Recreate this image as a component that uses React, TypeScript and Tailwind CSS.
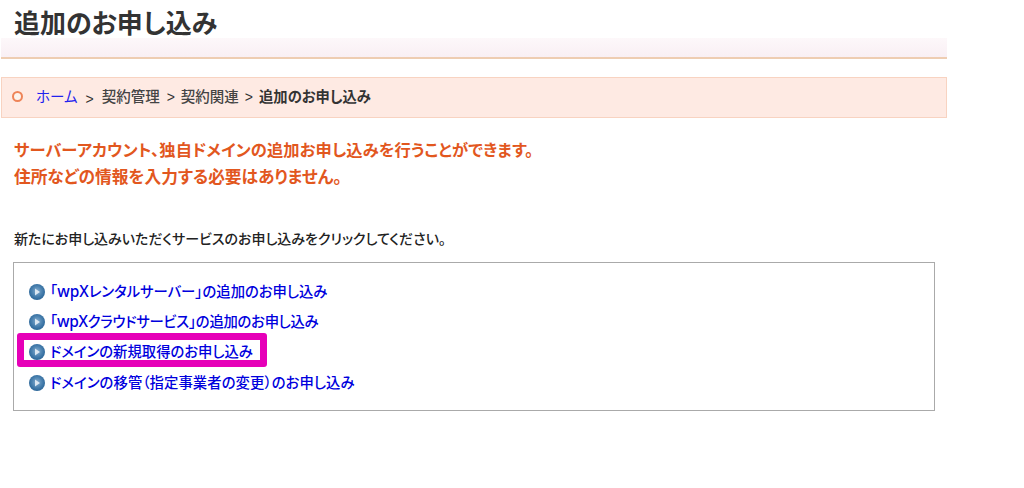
const font = "font-['Liberation_Sans','Noto_Sans_CJK_JP',sans-serif]";

function Bullet() {
  return (
    <svg width="18" height="18" viewBox="0 0 18 18" className="shrink-0 blur-[0.4px]">
      <defs>
        <radialGradient id="bl" cx="50%" cy="45%" r="55%">
          <stop offset="0%" stopColor="#7fa9cc" />
          <stop offset="60%" stopColor="#3f79aa" />
          <stop offset="100%" stopColor="#1f5d92" />
        </radialGradient>
      </defs>
      <circle cx="9" cy="9" r="8" fill="url(#bl)" opacity="0.95" />
      <path d="M7 5.6 L12 9 L7 12.4 Z" fill="#e8f0f7" opacity="0.9" />
    </svg>
  );
}

function LinkRow({ children, spacing = "" }: { children: React.ReactNode; spacing?: string }) {
  return (
    <div className="flex items-center gap-[4px] h-[30.2px] pl-[14px]">
      <Bullet />
      <a className={`text-[14.35px] leading-[20px] font-medium text-[#0000dd] [font-feature-settings:'palt'] whitespace-nowrap ${spacing}`}>{children}</a>
    </div>
  );
}

function Wpx() {
  return <span className="font-['Noto_Sans',sans-serif] text-[15.5px] leading-none font-medium">wpX</span>;
}

export default function App() {
  return (
    <div className={`${font} w-[1024px] h-[488px] bg-white overflow-hidden text-[#333]`}>
      <div className="w-[947px]">
        <h1 className="h-[38px] pl-[14px] pt-[7px] text-[26px] leading-[34px] font-bold text-[#333] [font-feature-settings:'palt'] overflow-visible whitespace-nowrap">追加のお申し込み</h1>
        <div className="h-[21px] ml-[1px] bg-gradient-to-b from-[#fdf8fa] to-[#f9eff4] border-b-2 border-[#eecdb2]"></div>

        <div className="mt-[18px] h-[41px] ml-[1px] bg-[#feeae3] border border-[#f8d3c1] flex items-center pl-[10px] text-[14px] whitespace-nowrap">
          <span className="w-[11px] h-[11px] rounded-full border-2 border-[#ee8458] bg-[#fdf3ec] mb-[3px]"></span>
          <a className="ml-[13px] text-[14.5px] font-normal text-[#2222ee] [font-feature-settings:'palt']">ホーム</a>
          <span className="ml-[8px] mt-[3px] text-[#333] font-normal">&gt;</span>
          <span className="ml-[8px] text-[14.5px] text-[#444] font-medium [font-feature-settings:'palt']">契約管理</span>
          <span className="ml-[7px] font-normal">&gt;</span>
          <span className="ml-[6px] text-[14.5px] text-[#444] font-medium [font-feature-settings:'palt']">契約関連</span>
          <span className="ml-[6px] font-normal">&gt;</span>
          <span className="ml-[6px] text-[14.3px] font-bold text-[#333] [font-feature-settings:'palt']">追加のお申し込み</span>
        </div>

        <div className="mt-[19px] pl-[14px] text-[16.3px] leading-[27px] font-bold text-[#e2571e] [font-feature-settings:'palt'] whitespace-nowrap">
          <p className="tracking-[0.1px]">サーバーアカウント<span className="[font-feature-settings:'normal']">、</span>独自ドメインの追加お申し込みを行うことができます。</p>
          <p className="text-[16.7px]">住所などの情報を入力する必要はありません。</p>
        </div>

        <p className="mt-[38px] pl-[14px] text-[14px] leading-[20px] text-[#222] font-medium [font-feature-settings:'palt'] whitespace-nowrap">新たにお申し込みいただくサービスのお申し込みをクリックしてください。</p>

        <div className="relative mt-[13px] ml-[13px] w-[922px] h-[149px] border border-[#aaa] pt-[14px]">
          <LinkRow>「<Wpx />レンタルサーバー」の追加のお申し込み</LinkRow>
          <LinkRow spacing="tracking-[-0.26px]">「<Wpx />クラウドサービス」の追加のお申し込み</LinkRow>
          <LinkRow>ドメインの新規取得のお申し込み</LinkRow>
          <LinkRow spacing="tracking-[0.08px]">ドメインの移管（指定事業者の変更）のお申し込み</LinkRow>
          <div className="absolute left-[3px] top-[70px] w-[250px] h-[34px] border-[7px] border-[#e600b8] rounded-[3px]"></div>
        </div>
      </div>
    </div>
  );
}
